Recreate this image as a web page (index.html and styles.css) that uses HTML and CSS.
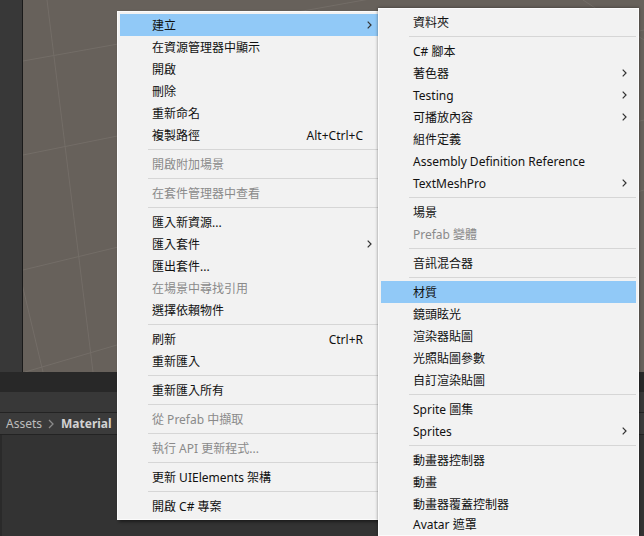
FILE: index.html
```html
<!DOCTYPE html>
<html lang="zh-Hant">
<head>
<meta charset="utf-8">
<title>Unity Context Menu</title>
<link rel="stylesheet" href="styles.css">
</head>
<body>
<div class="editor">
  <div class="top">
    <div class="strip"></div>
    <div class="scene">
      <svg class="grid" width="621" height="372" viewBox="0 0 621 372">
        <g stroke="#736d67" stroke-width="1" fill="none">
          <line x1="0" y1="61" x2="621" y2="-50"/>
          <line x1="0" y1="155" x2="621" y2="30"/>
          <line x1="0" y1="270" x2="621" y2="120"/>
          <line x1="2" y1="372" x2="621" y2="190"/>
          <line x1="24" y1="0" x2="70" y2="372"/>
          <line x1="-40" y1="120" x2="20" y2="372"/>
          <line x1="560" y1="0" x2="621" y2="40"/>
        </g>
      </svg>
    </div>
  </div>
  <div class="bar-dark"></div>
  <div class="bar-mid"></div>
  <div class="crumbs">
    <span class="crumb">Assets</span>
    <svg class="crumb-sep" width="7" height="10" viewBox="0 0 7 10"><polyline points="1,1 5,5 1,9" fill="none" stroke="#8a8a8a" stroke-width="1.3"/></svg>
    <span class="crumb crumb-current">Material</span>
  </div>
  <div class="panel"></div>
</div>

<div class="menu menu-main">
  <div class="item active"><span class="label">建立</span><svg class="arrow" width="5" height="8" viewBox="0 0 5 8"><polyline points="0.7,0.7 4,4 0.7,7.3" fill="none" stroke="#333" stroke-width="1.2"/></svg></div>
  <div class="item"><span class="label">在資源管理器中顯示</span></div>
  <div class="item"><span class="label">開啟</span></div>
  <div class="item"><span class="label">刪除</span></div>
  <div class="item"><span class="label">重新命名</span></div>
  <div class="item"><span class="label">複製路徑</span><span class="shortcut">Alt+Ctrl+C</span></div>
  <div class="sep"></div>
  <div class="item disabled"><span class="label">開啟附加場景</span></div>
  <div class="sep"></div>
  <div class="item disabled"><span class="label">在套件管理器中查看</span></div>
  <div class="sep"></div>
  <div class="item"><span class="label">匯入新資源...</span></div>
  <div class="item"><span class="label">匯入套件</span><svg class="arrow" width="5" height="8" viewBox="0 0 5 8"><polyline points="0.7,0.7 4,4 0.7,7.3" fill="none" stroke="#333" stroke-width="1.2"/></svg></div>
  <div class="item"><span class="label">匯出套件...</span></div>
  <div class="item disabled"><span class="label">在場景中尋找引用</span></div>
  <div class="item"><span class="label">選擇依賴物件</span></div>
  <div class="sep"></div>
  <div class="item"><span class="label">刷新</span><span class="shortcut">Ctrl+R</span></div>
  <div class="item"><span class="label">重新匯入</span></div>
  <div class="sep"></div>
  <div class="item"><span class="label">重新匯入所有</span></div>
  <div class="sep"></div>
  <div class="item disabled"><span class="label">從 Prefab 中擷取</span></div>
  <div class="sep"></div>
  <div class="item disabled"><span class="label">執行 API 更新程式...</span></div>
  <div class="sep"></div>
  <div class="item"><span class="label">更新 UIElements 架構</span></div>
  <div class="sep"></div>
  <div class="item"><span class="label">開啟 C# 專案</span></div>
</div>

<div class="menu menu-sub">
  <div class="item"><span class="label">資料夾</span></div>
  <div class="sep"></div>
  <div class="item"><span class="label">C# 腳本</span></div>
  <div class="item"><span class="label">著色器</span><svg class="arrow" width="5" height="8" viewBox="0 0 5 8"><polyline points="0.7,0.7 4,4 0.7,7.3" fill="none" stroke="#333" stroke-width="1.2"/></svg></div>
  <div class="item"><span class="label">Testing</span><svg class="arrow" width="5" height="8" viewBox="0 0 5 8"><polyline points="0.7,0.7 4,4 0.7,7.3" fill="none" stroke="#333" stroke-width="1.2"/></svg></div>
  <div class="item"><span class="label">可播放內容</span><svg class="arrow" width="5" height="8" viewBox="0 0 5 8"><polyline points="0.7,0.7 4,4 0.7,7.3" fill="none" stroke="#333" stroke-width="1.2"/></svg></div>
  <div class="item"><span class="label">組件定義</span></div>
  <div class="item"><span class="label">Assembly Definition Reference</span></div>
  <div class="item"><span class="label">TextMeshPro</span><svg class="arrow" width="5" height="8" viewBox="0 0 5 8"><polyline points="0.7,0.7 4,4 0.7,7.3" fill="none" stroke="#333" stroke-width="1.2"/></svg></div>
  <div class="sep"></div>
  <div class="item"><span class="label">場景</span></div>
  <div class="item disabled"><span class="label">Prefab 變體</span></div>
  <div class="sep"></div>
  <div class="item"><span class="label">音訊混合器</span></div>
  <div class="sep"></div>
  <div class="item active"><span class="label">材質</span></div>
  <div class="item"><span class="label">鏡頭眩光</span></div>
  <div class="item"><span class="label">渲染器貼圖</span></div>
  <div class="item"><span class="label">光照貼圖參數</span></div>
  <div class="item"><span class="label">自訂渲染貼圖</span></div>
  <div class="sep"></div>
  <div class="item"><span class="label">Sprite 圖集</span></div>
  <div class="item"><span class="label">Sprites</span><svg class="arrow" width="5" height="8" viewBox="0 0 5 8"><polyline points="0.7,0.7 4,4 0.7,7.3" fill="none" stroke="#333" stroke-width="1.2"/></svg></div>
  <div class="sep"></div>
  <div class="item"><span class="label">動畫器控制器</span></div>
  <div class="item"><span class="label">動畫</span></div>
  <div class="item"><span class="label">動畫器覆蓋控制器</span></div>
  <div class="item item-last"><span class="label">Avatar 遮罩</span></div>
</div>
</body>
</html>
```

FILE: styles.css
```css
html, body {
  margin: 0;
  padding: 0;
}
body {
  width: 644px;
  height: 536px;
  overflow: hidden;
  position: relative;
  background: #323232;
  font-family: "Noto Sans", "Noto Sans CJK TC", sans-serif;
}
.editor {
  display: flex;
  flex-direction: column;
  height: 536px;
}
.top {
  display: flex;
  height: 372px;
}
.strip {
  width: 22px;
  background: #383838;
  border-right: 1px solid #1a1a1a;
}
.scene {
  flex: 1;
  background: #67615b;
  overflow: hidden;
}
.grid {
  display: block;
}
.bar-dark {
  height: 20px;
  background: #282828;
}
.bar-mid {
  height: 20px;
  background: #383838;
  border-bottom: 1px solid #232323;
}
.crumbs {
  height: 21px;
  background: #3b3b3b;
  border-bottom: 1px solid #232323;
  display: flex;
  align-items: center;
  gap: 6px;
  padding-left: 6px;
  font-size: 12px;
  color: #bdbdbd;
}
.crumb-current {
  font-weight: bold;
  color: #d2d2d2;
}
.panel {
  flex: 1;
  background: #333333;
  border-left: 2px solid #2a2a2a;
}

.menu {
  position: absolute;
  background: #f2f2f2;
  border: 1px solid #fbfbfb;
  padding: 2px;
  font-size: 12px;
  color: #111;
}
.menu-main {
  left: 117px;
  top: 11px;
  width: 261px;
  padding-bottom: 2px;
  box-shadow: 2px 2px 3px rgba(0, 0, 0, 0.45);
}
.menu-sub {
  left: 378px;
  top: 8px;
  width: 255px;
  padding-bottom: 0;
  box-shadow: 0 0 3px rgba(0, 0, 0, 0.45);
}
.item {
  height: 22px;
  display: flex;
  align-items: center;
  padding-left: 32px;
  padding-right: 9px;
  white-space: nowrap;
}
.item-last {
  height: 20px;
  align-items: flex-start;
  line-height: 20px;
}
.item .label {
  flex: 1;
}
.item.active {
  background: #91c9f7;
}
.item.disabled {
  color: #8a8a8a;
}
.shortcut {
  padding-right: 9px;
}
.arrow {
  display: block;
}
.sep {
  height: 1px;
  margin: 3px 0 3px 28px;
  background: #d6d6d6;
}
```
